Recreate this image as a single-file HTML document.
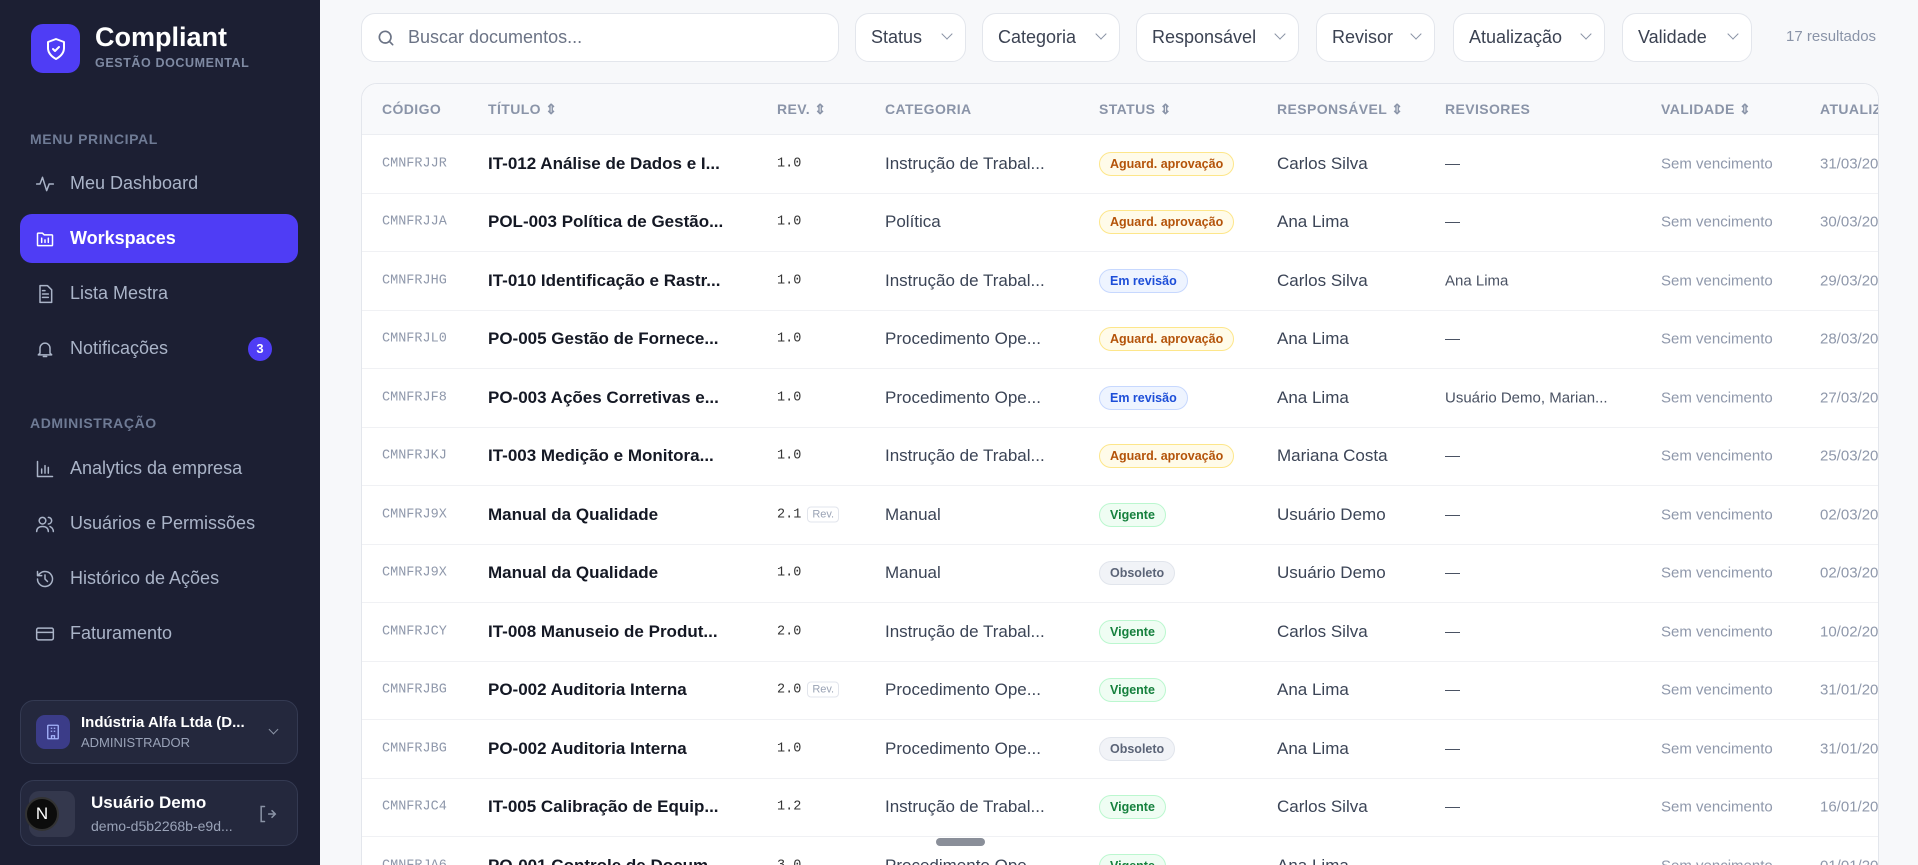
<!DOCTYPE html>
<html style="overflow:hidden;width:1918px;height:865px"><head><meta charset="utf-8"><style>
*{box-sizing:border-box;margin:0;padding:0}
html,body{overflow:hidden}
body{width:1918px;height:865px;overflow:hidden;background:#f7f8fa;font-family:"Liberation Sans",sans-serif;position:relative}
.sb{position:absolute;left:0;top:0;width:320px;height:865px;background:#1c1f33}
.logo{position:absolute;left:31px;top:24px;width:49px;height:49px;border-radius:12px;background:#4f3df5;display:flex;align-items:center;justify-content:center}
.brand{position:absolute;left:95px;top:22px;color:#fff;font-size:27px;font-weight:700}
.sub{position:absolute;left:95px;top:56px;color:#7f8aa3;font-size:12.5px;font-weight:700;letter-spacing:.6px}
.sec{position:absolute;left:30px;color:#6f7b95;font-size:14px;font-weight:700;letter-spacing:.6px}
.it{position:absolute;left:20px;width:278px;height:49px;border-radius:12px;display:flex;align-items:center;padding-left:15px;color:#aab4c8;font-size:18px}
.it svg{width:20px;height:20px;margin-right:15px;fill:none;stroke:#aab4c8;stroke-width:1.8;stroke-linecap:round;stroke-linejoin:round}
.it.act{background:#4f3df5;color:#fff;font-weight:700}
.it.act svg{stroke:#fff}
.badge{position:absolute;right:26px;top:13px;width:24px;height:24px;border-radius:12px;background:#4f3df5;color:#fff;font-size:13px;font-weight:700;text-align:center;line-height:24px}
.card{position:absolute;left:20px;width:278px;border:1px solid #343a52;border-radius:14px;background:#24283d}
.srch{position:absolute;left:361px;top:13px;width:478px;height:49px;border:1px solid #e3e6ec;border-radius:14px;background:#fff;display:flex;align-items:center;padding-left:14px;color:#6b7385;font-size:18px}
.f{position:absolute;top:13px;height:49px;border:1px solid #e3e6ec;border-radius:14px;background:#fff;display:flex;align-items:center;padding-left:15px;color:#3b4252;font-size:18px}
.f i{position:absolute;right:14px;top:16px;width:8px;height:8px;border-right:1.6px solid #8a93a5;border-bottom:1.6px solid #8a93a5;transform:rotate(45deg)}
.tbl{position:absolute;left:361px;top:83px;width:1518px;height:800px;border:1px solid #e3e6ec;border-radius:16px;background:#fff;overflow:hidden}
.hd{position:absolute;left:0;top:0;width:100%;height:51px;background:#f8f9fb;border-bottom:1px solid #eceef2}
.hd span{position:absolute;top:17px;color:#8a94a8;font-size:14px;font-weight:700;letter-spacing:.4px}
.row{position:absolute;left:0;width:100%;height:58.5px;border-bottom:1px solid #f0f1f4}
.row span{position:absolute;top:50%;transform:translateY(-50%);white-space:nowrap}
.c0{left:20px;font-family:"Liberation Mono",monospace;font-size:13.5px;color:#8f98ab}
.c1{left:126px;font-weight:700;font-size:17px;color:#141824}
.c2{left:415px;font-family:"Liberation Mono",monospace;font-size:13.5px;color:#333}
.c3{left:523px;font-size:17px;color:#3b4456}
.c5{left:915px;font-size:17px;color:#3b4456}
.c6{left:1083px;font-size:15px;color:#4a5263}
.c7{left:1299px;font-size:15px;color:#8f98ab}
.c8{left:1458px;font-size:15px;color:#8f98ab}
.b{left:737px;font-size:12.5px;font-weight:700;padding:4px 10px;border-radius:12px;border:1px solid}
.ag{background:#fffbe9;border-color:#fde68a;color:#b45309}
.er{background:#eef4ff;border-color:#c7d8fe;color:#1d4ed8}
.vg{background:#effdf3;border-color:#bbf7cf;color:#15803d}
.ob{background:#f1f3f7;border-color:#e1e5ec;color:#5b6477}
.rv{font-family:"Liberation Sans",sans-serif;font-size:11px;color:#9aa3b5;border:1px solid #e2e5ec;border-radius:4px;padding:1px 4px;margin-left:6px}
</style></head><body>
<div class="sb">
<div class="logo"><svg width="24" height="24" viewBox="0 0 24 24" fill="none" stroke="#fff" stroke-width="2" stroke-linecap="round" stroke-linejoin="round"><path d="M12 2l8 3v6c0 5-3.5 8.5-8 11-4.5-2.5-8-6-8-11V5z"/><path d="M9 12l2 2 4-4"/></svg></div>
<div class="brand">Compliant</div><div class="sub">GESTÃO DOCUMENTAL</div>
<div class="sec" style="top:131px">MENU PRINCIPAL</div>
<div class="it" style="top:159px"><svg viewBox="0 0 24 24"><path d="M2 12h4l3-8 5 16 3-8h5"/></svg>Meu Dashboard</div>
<div class="it act" style="top:214px"><svg viewBox="0 0 24 24"><path d="M3 6a1 1 0 011-1h5l2 2h9a1 1 0 011 1v11a1 1 0 01-1 1H4a1 1 0 01-1-1z"/><path d="M8 11v5M12 13v3M16 11v5"/></svg>Workspaces</div>
<div class="it" style="top:269px"><svg viewBox="0 0 24 24"><path d="M6 2h9l5 5v15H6z"/><path d="M9 12h7M9 16h7M9 8h3"/></svg>Lista Mestra</div>
<div class="it" style="top:324px"><svg viewBox="0 0 24 24"><path d="M6 17V11a6 6 0 0112 0v6l2 2H4z"/><path d="M10 21h4"/></svg>Notificações<div class="badge">3</div></div>
<div class="sec" style="top:415px">ADMINISTRAÇÃO</div>
<div class="it" style="top:444px"><svg viewBox="0 0 24 24"><path d="M3 3v18h18M8 17v-5M12 17V8M16 17v-7"/></svg>Analytics da empresa</div>
<div class="it" style="top:499px"><svg viewBox="0 0 24 24"><circle cx="9" cy="8" r="4"/><path d="M2 21c0-4 3-6 7-6s7 2 7 6M16 4a4 4 0 010 8M22 21c0-3-2-5-4-6"/></svg>Usuários e Permissões</div>
<div class="it" style="top:554px"><svg viewBox="0 0 24 24"><path d="M3 12a9 9 0 103-6.7L3 8M3 3v5h5M12 7v5l3 3"/></svg>Histórico de Ações</div>
<div class="it" style="top:609px"><svg viewBox="0 0 24 24"><rect x="2" y="5" width="20" height="14" rx="2"/><path d="M2 10h20"/></svg>Faturamento</div>
<div class="card" style="top:700px;height:64px">
<div style="position:absolute;left:15px;top:14px;width:34px;height:34px;border-radius:9px;background:#3b3c88;display:flex;align-items:center;justify-content:center"><svg width="18" height="18" viewBox="0 0 24 24" fill="none" stroke="#a5b4fc" stroke-width="1.8"><rect x="5" y="3" width="14" height="18" rx="1"/><path d="M9 7h2M13 7h2M9 11h2M13 11h2M10 21v-4h4v4"/></svg></div>
<div style="position:absolute;left:60px;top:13px;color:#fff;font-size:15px;font-weight:700">Indústria Alfa Ltda (D...</div>
<div style="position:absolute;left:60px;top:34px;color:#9aa3b8;font-size:13px">ADMINISTRADOR</div>
<div style="position:absolute;right:20px;top:25px;width:7px;height:7px;border-right:1.5px solid #8a93a5;border-bottom:1.5px solid #8a93a5;transform:rotate(45deg)"></div></div>
<div class="card" style="top:780px;height:66px">
<div style="position:absolute;left:8px;top:10px;width:46px;height:46px;border-radius:10px;background:#34384d"></div>
<div style="position:absolute;left:4px;top:16px;width:34px;height:34px;border-radius:17px;background:#0c0c0c;border:2px solid #333;color:#fff;font-size:17px;text-align:center;line-height:30px">N</div>
<div style="position:absolute;left:70px;top:12px;color:#fff;font-size:17px;font-weight:700">Usuário Demo</div>
<div style="position:absolute;left:70px;top:37px;color:#9aa3b8;font-size:14px">demo-d5b2268b-e9d...</div>
<svg style="position:absolute;right:20px;top:23px" width="20" height="20" viewBox="0 0 24 24" fill="none" stroke="#8a93a5" stroke-width="1.8" stroke-linecap="round"><path d="M9 3H5v18h4M14 12h8M18 8l4 4-4 4"/></svg></div>
</div>
<div class="srch"><svg width="20" height="20" viewBox="0 0 24 24" fill="none" stroke="#6b7385" stroke-width="2" stroke-linecap="round"><circle cx="11" cy="11" r="7"/><path d="M20 20l-4-4"/></svg><span style="margin-left:12px">Buscar documentos...</span></div>
<div class="f" style="left:855px;width:111px">Status<i></i></div>
<div class="f" style="left:982px;width:138px">Categoria<i></i></div>
<div class="f" style="left:1136px;width:163px">Responsável<i></i></div>
<div class="f" style="left:1316px;width:119px">Revisor<i></i></div>
<div class="f" style="left:1453px;width:152px">Atualização<i></i></div>
<div class="f" style="left:1622px;width:130px">Validade<i></i></div>
<div style="position:absolute;left:1786px;top:28px;color:#8a94a8;font-size:15px">17 resultados</div>
<div class="tbl">
<div class="hd"><span style="left:20px">CÓDIGO</span><span style="left:126px">TÍTULO ⇕</span><span style="left:415px">REV. ⇕</span><span style="left:523px">CATEGORIA</span><span style="left:737px">STATUS ⇕</span><span style="left:915px">RESPONSÁVEL ⇕</span><span style="left:1083px">REVISORES</span><span style="left:1299px">VALIDADE ⇕</span><span style="left:1458px">ATUALIZAÇÃO</span></div>
<div style="position:absolute;left:0;top:51px;width:100%">
<div class="row" style="top:0"><span class="c0">CMNFRJJR</span><span class="c1">IT-012 Análise de Dados e I...</span><span class="c2">1.0</span><span class="c3">Instrução de Trabal...</span><span class="b ag">Aguard. aprovação</span><span class="c5">Carlos Silva</span><span class="c6">—</span><span class="c7">Sem vencimento</span><span class="c8">31/03/2026</span></div>
<div class="row" style="top:58.5px"><span class="c0">CMNFRJJA</span><span class="c1">POL-003 Política de Gestão...</span><span class="c2">1.0</span><span class="c3">Política</span><span class="b ag">Aguard. aprovação</span><span class="c5">Ana Lima</span><span class="c6">—</span><span class="c7">Sem vencimento</span><span class="c8">30/03/2026</span></div>
<div class="row" style="top:117px"><span class="c0">CMNFRJHG</span><span class="c1">IT-010 Identificação e Rastr...</span><span class="c2">1.0</span><span class="c3">Instrução de Trabal...</span><span class="b er">Em revisão</span><span class="c5">Carlos Silva</span><span class="c6">Ana Lima</span><span class="c7">Sem vencimento</span><span class="c8">29/03/2026</span></div>
<div class="row" style="top:175.5px"><span class="c0">CMNFRJL0</span><span class="c1">PO-005 Gestão de Fornece...</span><span class="c2">1.0</span><span class="c3">Procedimento Ope...</span><span class="b ag">Aguard. aprovação</span><span class="c5">Ana Lima</span><span class="c6">—</span><span class="c7">Sem vencimento</span><span class="c8">28/03/2026</span></div>
<div class="row" style="top:234px"><span class="c0">CMNFRJF8</span><span class="c1">PO-003 Ações Corretivas e...</span><span class="c2">1.0</span><span class="c3">Procedimento Ope...</span><span class="b er">Em revisão</span><span class="c5">Ana Lima</span><span class="c6">Usuário Demo, Marian...</span><span class="c7">Sem vencimento</span><span class="c8">27/03/2026</span></div>
<div class="row" style="top:292.5px"><span class="c0">CMNFRJKJ</span><span class="c1">IT-003 Medição e Monitora...</span><span class="c2">1.0</span><span class="c3">Instrução de Trabal...</span><span class="b ag">Aguard. aprovação</span><span class="c5">Mariana Costa</span><span class="c6">—</span><span class="c7">Sem vencimento</span><span class="c8">25/03/2026</span></div>
<div class="row" style="top:351px"><span class="c0">CMNFRJ9X</span><span class="c1">Manual da Qualidade</span><span class="c2">2.1<span class="rv" style="position:static;transform:none">Rev.</span></span><span class="c3">Manual</span><span class="b vg">Vigente</span><span class="c5">Usuário Demo</span><span class="c6">—</span><span class="c7">Sem vencimento</span><span class="c8">02/03/2026</span></div>
<div class="row" style="top:409.5px"><span class="c0">CMNFRJ9X</span><span class="c1">Manual da Qualidade</span><span class="c2">1.0</span><span class="c3">Manual</span><span class="b ob">Obsoleto</span><span class="c5">Usuário Demo</span><span class="c6">—</span><span class="c7">Sem vencimento</span><span class="c8">02/03/2026</span></div>
<div class="row" style="top:468px"><span class="c0">CMNFRJCY</span><span class="c1">IT-008 Manuseio de Produt...</span><span class="c2">2.0</span><span class="c3">Instrução de Trabal...</span><span class="b vg">Vigente</span><span class="c5">Carlos Silva</span><span class="c6">—</span><span class="c7">Sem vencimento</span><span class="c8">10/02/2026</span></div>
<div class="row" style="top:526.5px"><span class="c0">CMNFRJBG</span><span class="c1">PO-002 Auditoria Interna</span><span class="c2">2.0<span class="rv" style="position:static;transform:none">Rev.</span></span><span class="c3">Procedimento Ope...</span><span class="b vg">Vigente</span><span class="c5">Ana Lima</span><span class="c6">—</span><span class="c7">Sem vencimento</span><span class="c8">31/01/2026</span></div>
<div class="row" style="top:585px"><span class="c0">CMNFRJBG</span><span class="c1">PO-002 Auditoria Interna</span><span class="c2">1.0</span><span class="c3">Procedimento Ope...</span><span class="b ob">Obsoleto</span><span class="c5">Ana Lima</span><span class="c6">—</span><span class="c7">Sem vencimento</span><span class="c8">31/01/2026</span></div>
<div class="row" style="top:643.5px"><span class="c0">CMNFRJC4</span><span class="c1">IT-005 Calibração de Equip...</span><span class="c2">1.2</span><span class="c3">Instrução de Trabal...</span><span class="b vg">Vigente</span><span class="c5">Carlos Silva</span><span class="c6">—</span><span class="c7">Sem vencimento</span><span class="c8">16/01/2026</span></div>
<div class="row" style="top:702px"><span class="c0">CMNFRJA6</span><span class="c1">PO-001 Controle de Docum...</span><span class="c2">3.0</span><span class="c3">Procedimento Ope...</span><span class="b vg">Vigente</span><span class="c5">Ana Lima</span><span class="c6">—</span><span class="c7">Sem vencimento</span><span class="c8">01/01/2026</span></div>
</div></div>
<div style="position:absolute;left:936px;top:838px;width:49px;height:8px;border-radius:4px;background:#8a8f99"></div>
</body></html>
